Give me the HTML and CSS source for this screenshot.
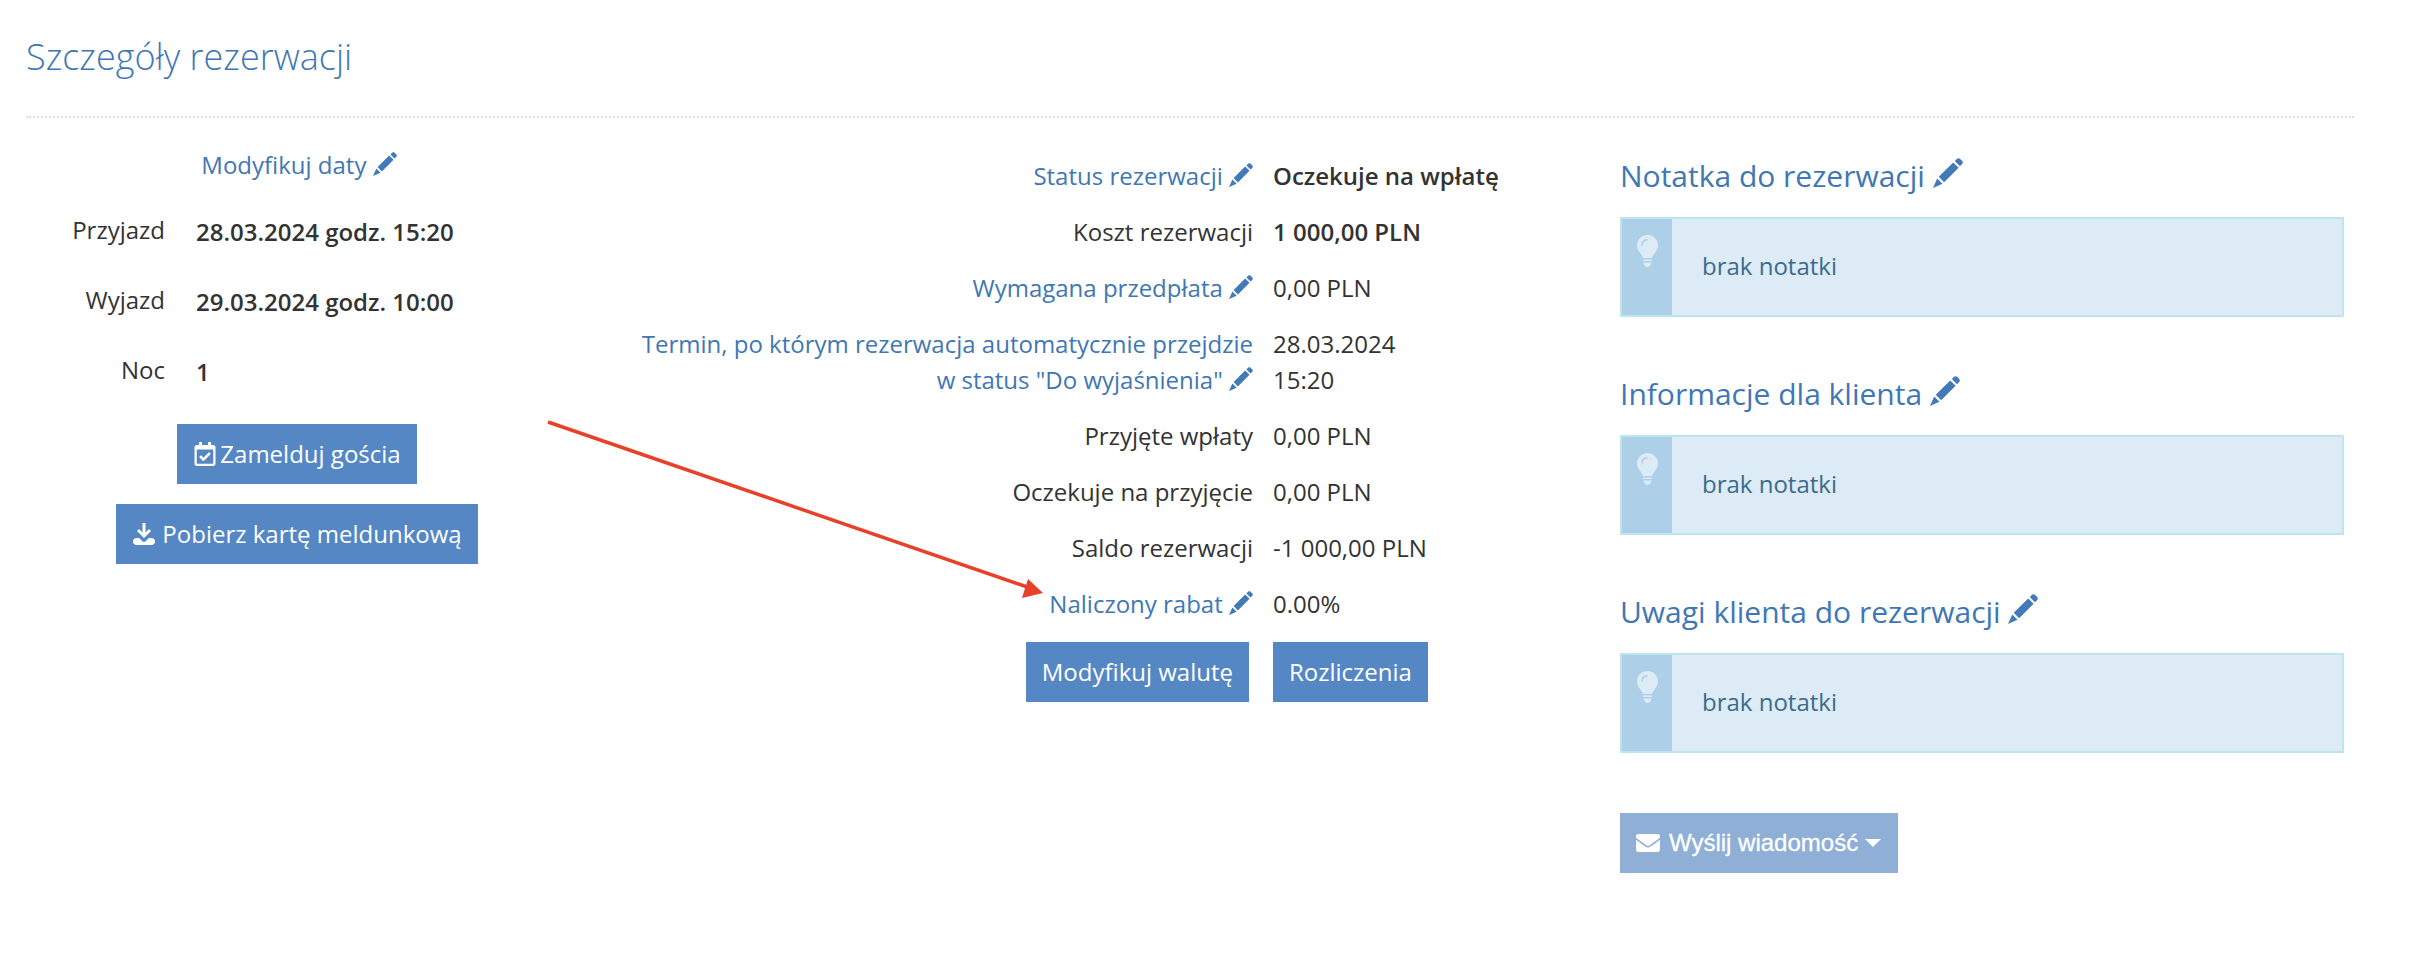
FILE: index.html
```html
<!DOCTYPE html>
<html lang="pl">
<head>
<meta charset="utf-8">
<title>Szczegóły rezerwacji</title>
<link rel="stylesheet" href="styles.css">
</head>
<body>
<svg class="defs" width="0" height="0" aria-hidden="true">
  <symbol id="pencil" viewBox="0 0 512 512">
    <path d="M372 52l38-38c14-14 36-14 50 0l38 38c14 14 14 36 0 50l-38 38z"/>
    <path d="M98 322L345 75l92 92-247 247z"/>
    <path d="M72 350l90 90L0 512z"/>
  </symbol>
  <symbol id="bulb" viewBox="0 0 21 32">
    <path class="bulb-fill" d="M10.500 0C4.700 0 0 4.600 0 10.300c0 3.100 1.200 5.200 2.700 7.200 1.300 1.800 2.800 3.400 3.300 5.500h9c.5-2.100 2-3.700 3.300-5.500 1.500-2 2.700-4.100 2.700-7.200C21 4.600 16.300 0 10.500 0z"/>
    <path class="bulb-shine" d="M5 10.500C5 7.200 7.300 5 10.500 4.800"/>
    <path class="bulb-fill" d="M6 24.500h9v1.500H6zM6.500 27.500h8c-.3 2.600-2 4.500-4 4.500s-3.700-1.900-4-4.500z"/>
  </symbol>
</svg>

<main class="page">
  <h1 class="page-title">Szczegóły rezerwacji</h1>

  <div class="columns">
    <section class="col-dates">
      <a class="link modify-dates">Modyfikuj daty <svg class="pencil"><use href="#pencil"/></svg></a>
      <div class="date-row"><span class="date-label">Przyjazd</span><strong>28.03.2024 godz. 15:20</strong></div>
      <div class="date-row"><span class="date-label">Wyjazd</span><strong>29.03.2024 godz. 10:00</strong></div>
      <div class="date-row"><span class="date-label">Noc</span><strong>1</strong></div>
      <a class="btn btn-checkin">
        <svg class="btn-icon" viewBox="0 0 448 512"><path d="M400 64h-48V12c0-6.600-5.400-12-12-12h-40c-6.600 0-12 5.400-12 12v52H160V12c0-6.600-5.400-12-12-12h-40c-6.600 0-12 5.400-12 12v52H48C21.500 64 0 85.500 0 112v352c0 26.500 21.500 48 48 48h352c26.500 0 48-21.500 48-48V112c0-26.500-21.500-48-48-48zm-6 400H54a6 6 0 0 1-6-6V160h352v298a6 6 0 0 1-6 6zm-52.849-200.650L198.842 404.519c-4.705 4.667-12.303 4.637-16.971-.068l-75.091-75.699c-4.667-4.705-4.637-12.303.068-16.971l22.719-22.536c4.705-4.667 12.303-4.637 16.970.069l44.104 44.461 111.072-110.181c4.705-4.667 12.303-4.637 16.971.068l22.536 22.718c4.667 4.705 4.636 12.303-.069 16.970z"/></svg>
        Zamelduj gościa
      </a>
      <a class="btn">
        <svg class="btn-icon" viewBox="0 0 24 24"><path d="M10.500 1h3v9.500l3.500-3.500 2 2-7 7-7-7 2-2 3.500 3.500z"/><path d="M1 19.500C1 17.500 2.500 16 4.500 16h2.700l3.300 3.300c.9.900 2.100.900 3 0l3.300-3.300h2.700c2 0 3.500 1.500 3.500 3.500S21.500 23 19.500 23h-15C2.500 23 1 21.500 1 19.500z"/></svg>
        Pobierz kartę meldunkową
      </a>
    </section>

    <section class="col-status">
      <div class="status-row"><div class="status-label"><a class="link">Status rezerwacji <svg class="pencil"><use href="#pencil"/></svg></a></div><strong class="status-value">Oczekuje na wpłatę</strong></div>
      <div class="status-row"><div class="status-label">Koszt rezerwacji</div><strong class="status-value">1 000,00 PLN</strong></div>
      <div class="status-row"><div class="status-label"><a class="link">Wymagana przedpłata <svg class="pencil"><use href="#pencil"/></svg></a></div><div class="status-value">0,00 PLN</div></div>
      <div class="status-row"><div class="status-label"><a class="link">Termin, po którym rezerwacja automatycznie przejdzie<br>w status "Do wyjaśnienia" <svg class="pencil"><use href="#pencil"/></svg></a></div><div class="status-value">28.03.2024<br>15:20</div></div>
      <div class="status-row"><div class="status-label">Przyjęte wpłaty</div><div class="status-value">0,00 PLN</div></div>
      <div class="status-row"><div class="status-label">Oczekuje na przyjęcie</div><div class="status-value">0,00 PLN</div></div>
      <div class="status-row"><div class="status-label">Saldo rezerwacji</div><div class="status-value">-1 000,00 PLN</div></div>
      <div class="status-row"><div class="status-label"><a class="link">Naliczony rabat <svg class="pencil"><use href="#pencil"/></svg></a></div><div class="status-value">0.00%</div></div>
      <div class="status-actions">
        <div class="status-actions-left"><a class="btn">Modyfikuj walutę</a></div>
        <a class="btn">Rozliczenia</a>
      </div>
    </section>

    <section class="col-notes">
      <h2 class="note-title">Notatka do rezerwacji <svg class="pencil pencil-lg"><use href="#pencil"/></svg></h2>
      <div class="note"><div class="note-side"><svg class="bulb"><use href="#bulb"/></svg></div><div class="note-text">brak notatki</div></div>
      <h2 class="note-title">Informacje dla klienta <svg class="pencil pencil-lg"><use href="#pencil"/></svg></h2>
      <div class="note"><div class="note-side"><svg class="bulb"><use href="#bulb"/></svg></div><div class="note-text">brak notatki</div></div>
      <h2 class="note-title">Uwagi klienta do rezerwacji <svg class="pencil pencil-lg"><use href="#pencil"/></svg></h2>
      <div class="note"><div class="note-side"><svg class="bulb"><use href="#bulb"/></svg></div><div class="note-text">brak notatki</div></div>
      <a class="btn btn-message">
        <svg class="btn-icon btn-icon-mail" viewBox="0 0 512 512"><path d="M502.300 190.800c3.900-3.100 9.700-.2 9.700 4.700V400c0 26.500-21.500 48-48 48H48c-26.500 0-48-21.500-48-48V195.600c0-5 5.700-7.800 9.700-4.700 22.400 17.400 52.100 39.500 154.100 113.600 21.100 15.400 56.700 47.800 92.200 47.600 35.700.3 72-32.800 92.300-47.600 102-74.100 131.600-96.300 154-113.700zM256 320c23.200.4 56.600-29.200 73.400-41.400 132.700-96.300 142.800-104.700 173.400-128.700 5.800-4.500 9.200-11.500 9.200-18.900v-19c0-26.500-21.500-48-48-48H48C21.500 64 0 85.500 0 112v19c0 7.400 3.400 14.300 9.200 18.900 30.600 23.900 40.700 32.400 173.400 128.700 16.800 12.200 50.200 41.800 73.400 41.400z"/></svg>
        Wyślij wiadomość <span class="caret"></span>
      </a>
    </section>
  </div>
</main>

<svg class="annotation" viewBox="0 0 2410 966" aria-hidden="true">
  <line class="annotation-line" x1="548" y1="422" x2="1030" y2="588"/>
  <polygon class="annotation-head" points="1043,593 1028,579 1022,598"/>
</svg>
</body>
</html>
```

FILE: styles.css
```css
html, body {
  margin: 0;
  padding: 0;
  background: #fff;
}
body {
  position: relative;
  width: 2410px;
  height: 966px;
  overflow: hidden;
  font-family: "Open Sans", "Liberation Sans", sans-serif;
  font-size: 24px;
  line-height: 36px;
  color: #333;
}
.defs {
  position: absolute;
}
.page {
  padding: 0 56px 0 26px;
}
.page-title {
  margin: 0;
  height: 116px;
  font-size: 36px;
  font-weight: 300;
  line-height: 114px;
  color: #3f77b5;
  border-bottom: 2px dotted #ddd;
}
.columns {
  display: flex;
  align-items: flex-start;
}
.link {
  color: #3f77b5;
}
.pencil {
  display: inline-block;
  width: 24px;
  height: 24px;
  fill: #4279b8;
  vertical-align: -2px;
}
.pencil-lg {
  width: 30px;
  height: 30px;
  vertical-align: -1px;
}
.btn {
  display: inline-flex;
  align-items: center;
  justify-content: center;
  gap: 6px;
  box-sizing: border-box;
  height: 60px;
  padding: 0 16px;
  background: #5487c4;
  color: #fff;
  white-space: nowrap;
}
.btn-icon {
  width: 24px;
  height: 24px;
  fill: #fff;
}

/* left column */
.col-dates {
  display: flex;
  flex-direction: column;
  width: 542px;
}
.modify-dates {
  align-self: center;
  margin-top: 29px;
  margin-bottom: 14px;
  margin-left: 4px;
}
.date-row {
  display: flex;
  align-items: flex-start;
  gap: 31px;
  height: 70px;
  line-height: 70px;
}
.date-row strong {
  font-weight: 600;
}
.date-label {
  width: 139px;
  text-align: right;
  line-height: 66px;
}
.col-dates .btn {
  align-self: center;
  margin-bottom: 20px;
}
.btn-checkin {
  gap: 3px;
  margin-top: 17px;
}

/* middle column */
.col-status {
  flex: none;
  width: 1000px;
  margin-left: 52px;
  padding-top: 40px;
}
.status-row {
  display: flex;
  gap: 20px;
  margin-bottom: 20px;
}
.status-label {
  width: 633px;
  text-align: right;
}
.status-value {
  display: block;
}
strong.status-value {
  font-weight: 600;
}
.status-actions {
  display: flex;
  gap: 24px;
}
.status-actions-left {
  display: flex;
  justify-content: flex-end;
  width: 629px;
}

/* right column */
.col-notes {
  flex: none;
  width: 724px;
  padding-top: 20px;
}
.note-title {
  margin: 0;
  height: 79px;
  font-size: 30px;
  font-weight: 400;
  line-height: 76px;
  color: #3f77b5;
}
.note {
  display: flex;
  box-sizing: border-box;
  height: 100px;
  margin-bottom: 39px;
  background: #dcebf6;
  border: 2px solid #bce5ef;
}
.note-side {
  flex: none;
  width: 50px;
  padding-top: 16px;
  box-sizing: border-box;
  display: flex;
  justify-content: center;
  align-items: flex-start;
  background: #aecfe8;
}
.bulb {
  width: 21px;
  height: 32px;
}
.bulb-fill {
  fill: #dcebf6;
}
.bulb-shine {
  fill: none;
  stroke: #aecfe8;
  stroke-width: 1.500;
}
.note-text {
  padding-left: 30px;
  line-height: 94px;
  color: #3b6b8c;
}
.btn-message {
  justify-content: flex-start;
  gap: 9px;
  margin-top: 21px;
  width: 278px;
  background: #8fafd6;
  font-family: "Liberation Sans", sans-serif;
  -webkit-text-stroke: 0.3px #fff;
}
.btn-icon-mail {
  width: 24px;
  height: 24px;
}
.caret {
  display: inline-block;
  width: 0;
  height: 0;
  margin-left: -2px;
  border-top: 8px solid #fff;
  border-left: 8px solid transparent;
  border-right: 8px solid transparent;
}

/* annotation arrow */
.annotation {
  position: absolute;
  left: 0;
  top: 0;
  width: 2410px;
  height: 966px;
  pointer-events: none;
}
.annotation-line {
  stroke: #e8412a;
  stroke-width: 3.500;
}
.annotation-head {
  fill: #e8412a;
}
```
